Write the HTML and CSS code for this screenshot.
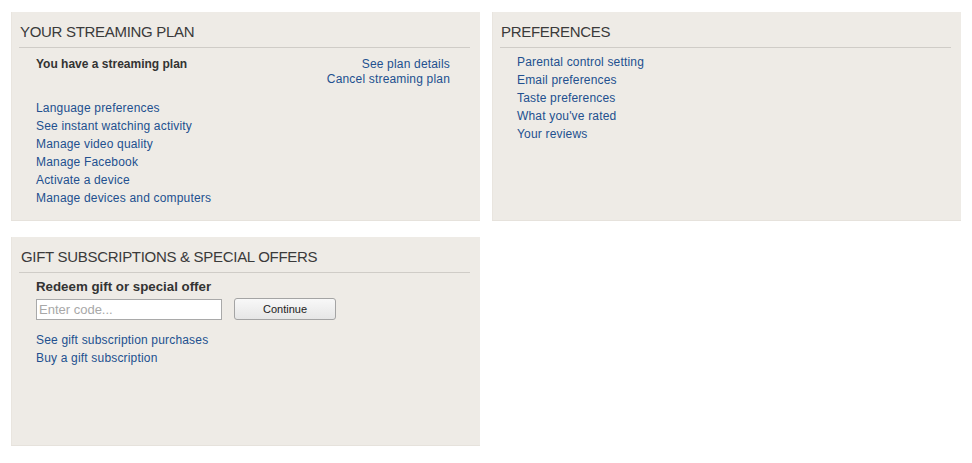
FILE: index.html
```html
<!DOCTYPE html>
<html>
<head>
<meta charset="utf-8">
<link rel="stylesheet" href="styles.css">
</head>
<body>
<div class="grid">
  <section class="panel">
    <h2 class="title">Your Streaming Plan</h2>
    <div class="body">
      <div class="plan-row">
        <div class="plan-label">You have a streaming plan</div>
        <div class="plan-links">
          <a href="#">See plan details</a>
          <a href="#">Cancel streaming plan</a>
        </div>
      </div>
      <ul class="links links-gap">
        <li><a href="#">Language preferences</a></li>
        <li><a href="#">See instant watching activity</a></li>
        <li><a href="#">Manage video quality</a></li>
        <li><a href="#">Manage Facebook</a></li>
        <li><a href="#">Activate a device</a></li>
        <li><a href="#">Manage devices and computers</a></li>
      </ul>
    </div>
  </section>
  <section class="panel">
    <h2 class="title">Preferences</h2>
    <div class="body body-pref">
      <ul class="links">
        <li><a href="#">Parental control setting</a></li>
        <li><a href="#">Email preferences</a></li>
        <li><a href="#">Taste preferences</a></li>
        <li><a href="#">What you've rated</a></li>
        <li><a href="#">Your reviews</a></li>
      </ul>
    </div>
  </section>
  <section class="panel">
    <h2 class="title title-gift">Gift Subscriptions &amp; Special Offers</h2>
    <div class="body body-gift">
      <div class="redeem-label">Redeem gift or special offer</div>
      <div class="redeem-row">
        <input class="code" type="text" placeholder="Enter code...">
        <button class="btn" type="button">Continue</button>
      </div>
      <ul class="links">
        <li><a href="#">See gift subscription purchases</a></li>
        <li><a href="#">Buy a gift subscription</a></li>
      </ul>
    </div>
  </section>
</div>
</body>
</html>
```
FILE: styles.css
```css
html, body {
  margin: 0;
  padding: 0;
  background: #ffffff;
}
body {
  font-family: "Liberation Sans", Arial, sans-serif;
  color: #333;
  padding: 12px 11px;
}
.grid {
  display: grid;
  grid-template-columns: 469px 469px;
  grid-auto-rows: 209px;
  column-gap: 12px;
  row-gap: 16px;
}
.panel {
  background: #eeebe6;
  padding: 11px 10px 0 8px;
  box-sizing: border-box;
  box-shadow: inset 0 -1px 0 #e6e2dc, inset 1px 0 0 #e9e5df;
}
.title {
  margin: 0;
  font-size: 15px;
  letter-spacing: -0.3px;
  font-weight: normal;
  line-height: 18px;
  text-transform: uppercase;
  color: #3a3a3a;
  padding: 0 0 6px 1px;
  border-bottom: 1px solid #cfccc7;
}
.title-gift {
  padding-left: 2px;
}
.body {
  padding: 9px 20px 0 17px;
}
.body-pref {
  padding-top: 5px;
}
.body-gift {
  padding-top: 6px;
}
.plan-row {
  display: flex;
  justify-content: space-between;
  align-items: flex-start;
}
.plan-label {
  font-size: 12px;
  font-weight: bold;
  line-height: 15px;
  color: #333;
}
.plan-links {
  display: flex;
  flex-direction: column;
  align-items: flex-end;
  font-size: 12px;
  letter-spacing: 0.18px;
  line-height: 15px;
}
a {
  color: #22508f;
  text-decoration: none;
}
.links {
  list-style: none;
  margin: 0;
  padding: 0;
  font-size: 12px;
  letter-spacing: 0.18px;
  line-height: 18px;
}
.links-gap {
  margin-top: 12px;
}
.redeem-label {
  font-size: 13.3px;
  font-weight: bold;
  line-height: 16px;
  color: #333;
}
.redeem-row {
  display: flex;
  align-items: center;
  gap: 12px;
  margin-top: 3px;
  margin-bottom: 11px;
}
.code {
  width: 186px;
  height: 21px;
  box-sizing: border-box;
  border: 1px solid #a9a9a9;
  background: #fff;
  font-family: "Liberation Sans", Arial, sans-serif;
  font-size: 13px;
  padding: 0 2px;
  margin: 0;
}
.code::placeholder {
  color: #a8a8a8;
}
.btn {
  width: 102px;
  height: 22px;
  box-sizing: border-box;
  border: 1px solid #a4a4a4;
  border-radius: 3px;
  background: linear-gradient(#f8f8f8, #e6e6e6);
  font-family: "Liberation Sans", Arial, sans-serif;
  font-size: 11px;
  color: #222;
  padding: 0;
  margin: 0;
}
```
